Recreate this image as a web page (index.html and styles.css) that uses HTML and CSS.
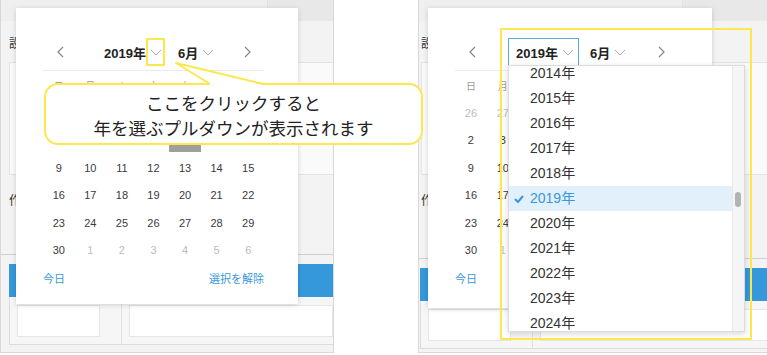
FILE: index.html
```html
<!DOCTYPE html>
<html lang="ja">
<head>
  <meta charset="UTF-8" />
  <title>年の選択</title>
  <link rel="stylesheet" href="styles.css">
</head>
<body>
  <div class="stage">
    <!-- 左：説明付きのカレンダー -->
    <section class="shot">
      <div class="tabs"><span class="tab"></span><span class="tab tab-dark"></span></div>
      <div class="lbl">設定日</div>
      <div class="field"></div>
      <div class="lbl lbl-2">作成者</div>
      <div class="bar"></div>
      <div class="foot-row">
        <div class="cell cell-1"><div class="inp"></div></div>
        <div class="cell"><div class="inp"></div></div>
      </div>

      <div class="picker">
        <div class="nav">
          <span class="arrow"><svg width="7" height="12" viewBox="0 0 7 12"><polyline points="6,1 1,6 6,11" fill="none" stroke="#8a8a8a" stroke-width="1.3"/></svg></span>
          <span class="sel">2019年<svg class="caret" width="12" height="7" viewBox="0 0 12 7"><polyline points="1,1 6,6 11,1" fill="none" stroke="#aaa" stroke-width="1"/></svg></span>
          <span class="sel sel-m">6月<svg class="caret" width="12" height="7" viewBox="0 0 12 7"><polyline points="1,1 6,6 11,1" fill="none" stroke="#aaa" stroke-width="1"/></svg></span>
          <span class="arrow next"><svg width="7" height="12" viewBox="0 0 7 12"><polyline points="1,1 6,6 1,11" fill="none" stroke="#8a8a8a" stroke-width="1.3"/></svg></span>
        </div>
        <div class="days">
          <span class="wd">日</span><span class="wd">月</span><span class="wd">火</span><span class="wd">水</span><span class="wd">木</span><span class="wd">金</span><span class="wd">土</span>
          <span class="dim">26</span><span class="dim">27</span><span class="dim">28</span><span class="dim">29</span><span class="dim">30</span><span class="dim">31</span><span>1</span>
          <span>2</span><span>3</span><span>4</span><span>5</span><span class="pick">6</span><span>7</span><span>8</span>
          <span>9</span><span>10</span><span>11</span><span>12</span><span>13</span><span>14</span><span>15</span>
          <span>16</span><span>17</span><span>18</span><span>19</span><span>20</span><span>21</span><span>22</span>
          <span>23</span><span>24</span><span>25</span><span>26</span><span>27</span><span>28</span><span>29</span>
          <span>30</span><span class="dim">1</span><span class="dim">2</span><span class="dim">3</span><span class="dim">4</span><span class="dim">5</span><span class="dim">6</span>
        </div>
        <div class="links"><span>今日</span><span>選択を解除</span></div>
      </div>
      <div class="mark"></div>
    </section>

    <!-- 右：プルダウンを開いた状態 -->
    <section class="shot shot-r">
      <div class="tabs"><span class="tab"></span><span class="tab tab-dark"></span></div>
      <div class="lbl">設定日</div>
      <div class="field"></div>
      <div class="lbl lbl-2">作成者</div>
      <div class="bar"></div>
      <div class="foot-row">
        <div class="cell cell-1"><div class="inp"></div></div>
        <div class="cell"><div class="inp"></div></div>
      </div>

      <div class="picker picker-r">
        <div class="nav">
          <span class="arrow"><svg width="7" height="12" viewBox="0 0 7 12"><polyline points="6,1 1,6 6,11" fill="none" stroke="#8a8a8a" stroke-width="1.3"/></svg></span>
          <span class="sel sel-open">2019年<svg class="caret" width="12" height="7" viewBox="0 0 12 7"><polyline points="1,1 6,6 11,1" fill="none" stroke="#aaa" stroke-width="1"/></svg></span>
          <span class="sel sel-m">6月<svg class="caret" width="12" height="7" viewBox="0 0 12 7"><polyline points="1,1 6,6 11,1" fill="none" stroke="#aaa" stroke-width="1"/></svg></span>
          <span class="arrow next"><svg width="7" height="12" viewBox="0 0 7 12"><polyline points="1,1 6,6 1,11" fill="none" stroke="#8a8a8a" stroke-width="1.3"/></svg></span>
        </div>
        <div class="days">
          <span class="wd">日</span><span class="wd">月</span><span class="wd">火</span><span class="wd">水</span><span class="wd">木</span><span class="wd">金</span><span class="wd">土</span>
          <span class="dim">26</span><span class="dim">27</span><span class="dim">28</span><span class="dim">29</span><span class="dim">30</span><span class="dim">31</span><span>1</span>
          <span>2</span><span>3</span><span>4</span><span>5</span><span class="pick">6</span><span>7</span><span>8</span>
          <span>9</span><span>10</span><span>11</span><span>12</span><span>13</span><span>14</span><span>15</span>
          <span>16</span><span>17</span><span>18</span><span>19</span><span>20</span><span>21</span><span>22</span>
          <span>23</span><span>24</span><span>25</span><span>26</span><span>27</span><span>28</span><span>29</span>
          <span>30</span><span class="dim">1</span><span class="dim">2</span><span class="dim">3</span><span class="dim">4</span><span class="dim">5</span><span class="dim">6</span>
        </div>
        <div class="links"><span>今日</span><span>選択を解除</span></div>
      </div>

      <div class="drop">
        <ul class="years">
          <li>2014年</li>
          <li>2015年</li>
          <li>2016年</li>
          <li>2017年</li>
          <li>2018年</li>
          <li class="on"><svg class="check" width="10" height="8" viewBox="0 0 10 8"><polyline points="1,4 4,7 9,1" fill="none" stroke="#3697da" stroke-width="2"/></svg>2019年</li>
          <li>2020年</li>
          <li>2021年</li>
          <li>2022年</li>
          <li>2023年</li>
          <li>2024年</li>
        </ul>
        <div class="track"><span class="thumb"></span></div>
      </div>
      <div class="frame"></div>
    </section>

    <div class="bubble">
      <span>ここをクリックすると</span>
      <span>年を選ぶプルダウンが表示されます</span>
    </div>
    <svg class="tail" width="100" height="32" viewBox="0 0 100 32">
      <polygon points="6,5 45,30 105,30" fill="#fff"/>
      <polyline points="40,26 6,5 93,26" fill="none" stroke="#fce84d" stroke-width="2" stroke-linejoin="round"/>
    </svg>
  </div>
</body>
</html>
```

FILE: styles.css
```css
body { margin: 0; background: #fff; overflow: hidden; font-family: "Liberation Sans", "Noto Sans CJK JP", sans-serif; }

.stage { position: relative; width: 767px; height: 355px; display: flex; gap: 84px; overflow: hidden; }

/* 背景の画面 */
.shot { position: relative; flex: none; width: 334px; height: 353px; box-sizing: border-box; border: 1px solid #d8d8d8; border-top: 0; background: #f3f3f3; overflow: hidden; }
.shot-r { width: 360px; }
.tabs { display: flex; height: 21px; }
.tab { width: 266px; background: #efefef; border-right: 1px solid #e2e2e2; }
.tab-dark { flex: 1; width: auto; background: #e8e8e8; border-right: 0; }
.shot-r .tab { width: 263px; }
.shot-r .tab-dark { width: auto; }
.lbl { height: 41px; padding-left: 8px; font-size: 12px; line-height: 44px; color: #333; font-family: "Noto Sans CJK JP", sans-serif; }
.field { height: 111px; margin-left: 8px; background: #fafafa; border: 1px solid #e3e3e3; border-right: 0; }
.lbl-2 { height: 79px; line-height: 50px; border-bottom: 1px solid #cfcfcf; }
.bar { height: 33px; margin: 9px 0 0 8px; background: #3498db; }
.foot-row { display: flex; height: 47px; margin-left: 8px; border-left: 1px solid #dcdcdc; border-bottom: 1px solid #dcdcdc; background: #f6f6f6; }
.cell { flex: 1; display: flex; padding: 8px 0 7px 7px; }
.cell-1 { flex: none; width: 83px; padding-right: 21px; border-right: 1px solid #e0e0e0; }
.inp { flex: 1; background: #fff; border: 1px solid #e6e6e6; }
.shot-r .lbl { padding-left: 2px; }
.shot-r .field { margin-left: 2px; }
.shot-r .lbl-2 { height: 83px; }
.shot-r .bar { margin-left: 1px; }
.shot-r .foot-row { margin-left: 1px; }

/* カレンダー */
.picker { position: absolute; left: 15px; top: 8px; width: 282px; height: 296px; box-sizing: border-box; padding: 30px 34px 0 27px; background: #fff; box-shadow: 0 1px 5px rgba(0, 0, 0, 0.16); }
.picker-r { left: 9px; width: 284px; height: 300px; }
.nav { display: flex; align-items: center; height: 28px; margin-bottom: 4px; }
.arrow { width: 34px; display: flex; justify-content: center; }
.next { margin-left: auto; }
.sel { display: flex; align-items: center; gap: 4px; flex: none; width: 71px; height: 28px; box-sizing: border-box; margin-left: 19px; padding: 0 4px 0 7px; border: 1px solid transparent; white-space: nowrap; font-size: 13px; font-weight: bold; color: #222; font-family: "Liberation Sans", "Noto Sans CJK JP", sans-serif; }
.sel-m { width: auto; margin-left: 3px; }
.sel-open { border-color: #5aa9e2; }
.caret { flex: none; margin-top: 1px; }
.days { display: grid; grid-template-columns: repeat(7, 1fr); grid-template-rows: 28px repeat(6, 27.5px); border-top: 1px solid #e9e9e9; font-size: 11px; color: #3a3a3a; }
.days span { display: flex; align-items: center; justify-content: center; }
.days .wd { color: #9a9a9a; font-size: 10px; font-family: "Noto Sans CJK JP", sans-serif; }
.days .dim { color: #bcbcbc; }
.days .pick { margin: 1px 0 2px; background: #9e9e9e; color: #fff; }
.links { display: flex; justify-content: space-between; align-items: center; height: 28px; font-size: 11px; color: #3b98d8; font-family: "Noto Sans CJK JP", sans-serif; }

/* 年のプルダウン */
.drop { position: absolute; left: 89px; top: 65px; width: 237px; height: 267px; box-sizing: border-box; display: flex; overflow: hidden; background: #fff; border: 1px solid #dcdcdc; box-shadow: 0 2px 6px rgba(0, 0, 0, 0.15); }
.years { flex: 1; margin: -5px 0 0; padding: 0; list-style: none; }
.years li { position: relative; height: 25px; line-height: 25px; padding-left: 21px; font-size: 14px; color: #333; }
.years .on { background: #e1f0fb; color: #3697da; }
.check { position: absolute; left: 5px; top: 9px; }
.track { position: relative; width: 11px; background: #f5f5f5; border-left: 1px solid #e8e8e8; }
.thumb { position: absolute; left: 2px; top: 126px; width: 6px; height: 15px; border-radius: 3px; background: #b3b3b3; }

/* 注釈 */
.mark { position: absolute; left: 145px; top: 38px; width: 19px; height: 28px; box-sizing: border-box; border: 2px solid #fce84d; }
.frame { position: absolute; left: 81px; top: 28px; width: 252px; height: 312px; box-sizing: border-box; border: 2px solid #fce84d; }
.bubble { position: absolute; left: 44px; top: 83px; width: 379px; height: 62px; box-sizing: border-box; padding-top: 2px; display: flex; flex-direction: column; align-items: center; justify-content: center; border: 2px solid #fce84d; border-radius: 14px; background: #fff; font-family: "Noto Sans CJK JP", sans-serif; font-size: 17.5px; line-height: 25px; color: #222; }
.tail { position: absolute; left: 170px; top: 58px; overflow: visible; }
```
